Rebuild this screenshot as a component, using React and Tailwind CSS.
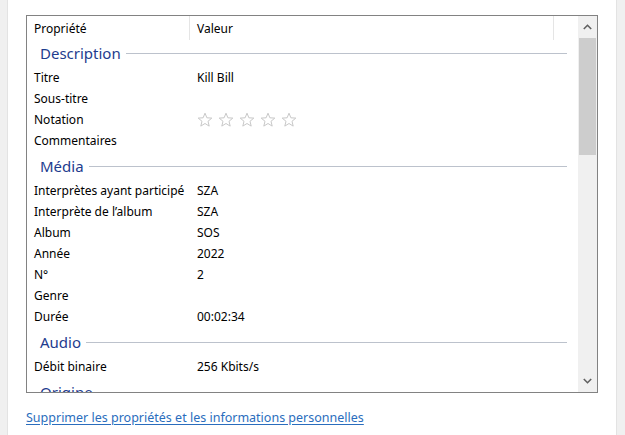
import React from 'react';

const sections = [
  {
    name: 'Description',
    first: true,
    rows: [
      { label: 'Titre', value: 'Kill Bill' },
      { label: 'Sous-titre', value: '' },
      { label: 'Notation', stars: true },
      { label: 'Commentaires', value: '' },
    ],
  },
  {
    name: 'Média',
    rows: [
      { label: 'Interprètes ayant participé', value: 'SZA' },
      { label: 'Interprète de l’album', value: 'SZA' },
      { label: 'Album', value: 'SOS' },
      { label: 'Année', value: '2022' },
      { label: 'N°', value: '2' },
      { label: 'Genre', value: '' },
      { label: 'Durée', value: '00:02:34' },
    ],
  },
  {
    name: 'Audio',
    rows: [{ label: 'Débit binaire', value: '256 Kbits/s' }],
  },
  {
    name: 'Origine',
    rows: [{ label: 'Éditeur', value: '' }],
  },
];

const Star = () => (
  <svg width="16" height="16" viewBox="0 0 16 16" className="shrink-0">
    <path
      d="M8 1.2l1.9 4.6 4.9.3-3.8 3.2 1.2 4.8L8 11.5l-4.2 2.6 1.2-4.8L1.2 6.1l4.9-.3z"
      fill="none"
      stroke="#c8c8c8"
      strokeWidth="1"
      strokeLinejoin="round"
    />
  </svg>
);

const GroupHeader = ({ name, first }) => (
  <div className={`flex items-center pl-[13px] pr-[11px] ${first ? 'h-[27px] pb-[1px]' : 'h-[29px] pt-[2px]'}`}>
    <span className="text-[15px] text-[#1e3c8e] leading-none">{name}</span>
    <div className="flex-1 h-px bg-[#bcc2cc] ml-[5px]" />
  </div>
);

const Row = ({ row }) => (
  <div className="flex items-center h-[21px]">
    <div className="w-[163px] pl-[7px] whitespace-nowrap">{row.label}</div>
    <div className="pl-[7px] flex items-center gap-[5px]">
      {row.stars ? [0, 1, 2, 3, 4].map((i) => <Star key={i} />) : row.value}
    </div>
  </div>
);

const ScrollBar = () => (
  <div className="w-[19px] bg-[#f0f0f0] flex flex-col items-center">
    <div className="h-[22px] w-full flex items-center justify-center">
      <svg width="9" height="6" viewBox="0 0 9 6">
        <path d="M0.8 5L4.5 1.3 8.2 5" fill="none" stroke="#606060" strokeWidth="1.6" />
      </svg>
    </div>
    <div className="w-[17px] h-[117px] bg-[#cdcdcd]" />
    <div className="flex-1" />
    <div className="h-[22px] w-full flex items-center justify-center">
      <svg width="9" height="6" viewBox="0 0 9 6">
        <path d="M0.8 1L4.5 4.7 8.2 1" fill="none" stroke="#606060" strokeWidth="1.6" />
      </svg>
    </div>
  </div>
);

export default function App() {
  return (
    <div
      className="w-[625px] h-[435px] flex bg-[#f0f0f0] text-[12px] text-black"
      style={{ fontFamily: '"Noto Sans", "Liberation Sans", sans-serif' }}
    >
      <div className="w-[8px] border-r border-[#e3e3e3]" />
      <div className="flex-1 bg-white flex flex-col pl-[18px] pt-[15px]">
        <div className="w-[572px] h-[378px] border border-[#828282] flex overflow-hidden">
          <div className="flex-1 overflow-hidden">
            <div className="flex h-[24px] items-center">
              <div className="w-[163px] h-full pl-[7px] pt-[1px] flex items-center border-r border-[#e5e5e5]">Propriété</div>
              <div className="w-[364px] h-full pl-[7px] pt-[1px] flex items-center border-r border-[#e5e5e5]">Valeur</div>
            </div>
            {sections.map((s) => (
              <div key={s.name}>
                <GroupHeader name={s.name} first={s.first} />
                {s.rows.map((r) => (
                  <Row key={r.label} row={r} />
                ))}
              </div>
            ))}
          </div>
          <ScrollBar />
        </div>
        <div className="mt-[16px]">
          <a href="#" className="text-[12.5px] text-[#2a6dbd] underline underline-offset-2">
            Supprimer les propriétés et les informations personnelles
          </a>
        </div>
      </div>
      <div className="w-[9px] border-l border-[#e3e3e3]" />
    </div>
  );
}
